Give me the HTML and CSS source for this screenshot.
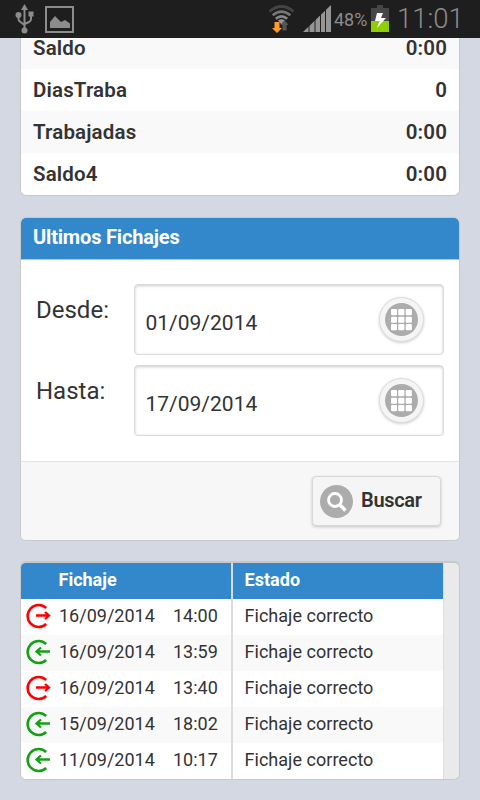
FILE: index.html
```html
<!DOCTYPE html>
<html lang="es">
<head>
  <meta charset="UTF-8" />
  <title>Fichajes</title>
  <link rel="stylesheet" href="styles.css">
</head>

<body>
  <!-- iconos compartidos -->
  <svg class="defs" width="0" height="0">
    <symbol id="salida" viewBox="0 0 26 26">
      <path d="M21.2 5A11 11 0 1 0 21.2 21" fill="none" stroke="#f00" stroke-width="2.6"/>
      <path d="M11 12.500h13M20 9l4 3.500-4 3.500" fill="none" stroke="#f00" stroke-width="2.3"/>
    </symbol>
    <symbol id="entrada" viewBox="0 0 26 26">
      <path d="M21.2 5A11 11 0 1 0 21.2 21" fill="none" stroke="#16a016" stroke-width="2.6"/>
      <path d="M25 12.500H11.500M16 8.500l-4.500 4 4.500 4" fill="none" stroke="#16a016" stroke-width="2.3"/>
    </symbol>
    <symbol id="rejilla" viewBox="0 0 33 33">
      <circle cx="16.500" cy="16.500" r="16.500" fill="#acacac"/>
      <g fill="#fff">
        <rect x="6" y="6" width="6" height="6.300" rx="1"/><rect x="13.200" y="6" width="6.200" height="6.300" rx="1"/><rect x="20.700" y="6" width="6.200" height="6.300" rx="1"/>
        <rect x="6" y="13.800" width="6" height="6" rx="1"/><rect x="13.200" y="13.800" width="6.200" height="6" rx="1"/><rect x="20.700" y="13.800" width="6.200" height="6" rx="1"/>
        <rect x="6" y="21" width="6" height="6.300" rx="1"/><rect x="13.200" y="21" width="6.200" height="6.300" rx="1"/><rect x="20.700" y="21" width="6.200" height="6.300" rx="1"/>
      </g>
    </symbol>
  </svg>

  <div class="statusbar">
    <svg class="usb" width="20" height="32" viewBox="0 0 20 32">
      <path d="M9.500 5v22M3.500 12v4q0 2 2 3l4 3M16 11v5q0 2-2 3l-4.500 2" fill="none" stroke="#8c8c8c" stroke-width="2"/>
      <path d="M9.500 1l3.500 6H6z" fill="#8c8c8c"/>
      <circle cx="3.500" cy="12" r="3" fill="#8c8c8c"/>
      <circle cx="9.500" cy="27.500" r="3" fill="#8c8c8c"/>
      <rect x="13.500" y="8.500" width="5" height="5" fill="#8c8c8c"/>
    </svg>
    <svg class="imagen" width="29" height="27" viewBox="0 0 29 27">
      <rect x="1" y="1" width="27" height="25" fill="none" stroke="#8c8c8c" stroke-width="2"/>
      <path d="M5 22v-6l5-6 6 6 4-2 5 3.500v4.500z" fill="#8c8c8c"/>
    </svg>
    <svg class="wifi" width="27" height="28" viewBox="0 0 27 28">
      <g fill="none" stroke-width="2.700">
        <path d="M1.500 6.500Q13.500-3.500 25.500 6.500" stroke="#444"/>
        <path d="M4.700 10.200Q13.500 3 22.300 10.200" stroke="#777"/>
        <path d="M7.800 13.700Q13.500 9 19.200 13.700" stroke="#888"/>
      </g>
      <path d="M10 15.500q3.500-2.500 7 0l-3.500 4z" fill="#999"/>
      <path d="M6.500 17h5v6h2.500l-5 5-5-5h2.500z" fill="#ff9c2c"/>
      <path d="M14.500 25.500V20H12.500l4-5 4 5h-2v5.500z" fill="#565656"/>
    </svg>
    <svg class="senal" width="28" height="27" viewBox="0 0 28 27">
      <path d="M0 27l28-27v27z" fill="#969696"/>
      <path d="M6 18v9M12 12v15M17.500 7v20M22.500 2v25" stroke="#202020" stroke-width="1"/>
    </svg>
    <span class="porcentaje">48%</span>
    <svg class="bateria" width="18" height="27" viewBox="0 0 18 27">
      <path d="M0 3h6V0h6v3h6v13H0z" fill="#464646"/>
      <path d="M0 16h18v11H0z" fill="#8fce00"/>
      <path d="M6 8h6l-2 5h5L6 23l2.500-7H4z" fill="#fff"/>
    </svg>
    <span class="reloj">11:01</span>
  </div>

  <div class="content">
    <div class="panel resumen">
      <div class="dato"><span>Saldo</span><span>0:00</span></div>
      <div class="dato"><span>DiasTraba</span><span>0</span></div>
      <div class="dato"><span>Trabajadas</span><span>0:00</span></div>
      <div class="dato"><span>Saldo4</span><span>0:00</span></div>
    </div>

    <div class="panel busqueda">
      <div class="titulo">Ultimos Fichajes</div>
      <div class="campos">
        <div class="campo">
          <label>Desde:</label>
          <div class="caja">
            <span>01/09/2014</span>
            <div class="boton-fecha"><svg width="33" height="33"><use href="#rejilla"/></svg></div>
          </div>
        </div>
        <div class="campo">
          <label>Hasta:</label>
          <div class="caja">
            <span>17/09/2014</span>
            <div class="boton-fecha"><svg width="33" height="33"><use href="#rejilla"/></svg></div>
          </div>
        </div>
      </div>
      <div class="pie">
        <div class="buscar">
          <svg width="33" height="33" viewBox="0 0 33 33">
            <circle cx="16.500" cy="16.500" r="16.500" fill="#acacac"/>
            <circle cx="15" cy="15" r="6.500" fill="none" stroke="#fff" stroke-width="2.800"/>
            <path d="M19.500 19.500l6 6" stroke="#fff" stroke-width="3.500"/>
          </svg>
          <span>Buscar</span>
        </div>
      </div>
    </div>

    <div class="panel lista">
      <div class="tabla">
        <div class="fila cabecera"><div class="fichaje">Fichaje</div><div class="estado">Estado</div></div>
        <div class="fila"><div class="fichaje"><svg><use href="#salida"/></svg><span class="fecha">16/09/2014</span><span>14:00</span></div><div class="estado">Fichaje correcto</div></div>
        <div class="fila"><div class="fichaje"><svg><use href="#entrada"/></svg><span class="fecha">16/09/2014</span><span>13:59</span></div><div class="estado">Fichaje correcto</div></div>
        <div class="fila"><div class="fichaje"><svg><use href="#salida"/></svg><span class="fecha">16/09/2014</span><span>13:40</span></div><div class="estado">Fichaje correcto</div></div>
        <div class="fila"><div class="fichaje"><svg><use href="#entrada"/></svg><span class="fecha">15/09/2014</span><span>18:02</span></div><div class="estado">Fichaje correcto</div></div>
        <div class="fila"><div class="fichaje"><svg><use href="#entrada"/></svg><span class="fecha">11/09/2014</span><span>10:17</span></div><div class="estado">Fichaje correcto</div></div>
      </div>
    </div>
  </div>
</body>
</html>
```
FILE: styles.css
```css
* {
  box-sizing: border-box;
}
body {
  margin: 0;
  height: 800px;
  overflow: hidden;
  background: #d4d8e2;
  color: #333;
  font-family: Roboto, sans-serif;
  display: flex;
  flex-direction: column;
}
svg {
  display: block;
  flex: none;
}
.defs {
  display: none;
}

/* Barra de estado */
.statusbar {
  flex: none;
  display: flex;
  align-items: flex-start;
  height: 38px;
  padding: 5px 0 0 15px;
  background: #1e1e1e;
  color: #8c8c8c;
  line-height: 28px;
}
.usb {
  margin-top: -2px;
}
.imagen {
  margin: 1px 0 0 10px;
}
.wifi {
  margin-left: 194px;
}
.senal {
  margin-left: 8px;
}
.porcentaje {
  width: 37px;
  margin-left: 3px;
  font-size: 18px;
  line-height: 30px;
}
.reloj {
  margin-left: 8px;
  font-size: 27.5px;
  font-weight: 300;
}

.content {
  flex: 1;
  padding: 0 20px;
}
.panel {
  border: 1px solid #c8c8c8;
  border-radius: 6px;
  background: #fff;
  overflow: hidden;
}

/* Totales, la primera fila queda pegada a la barra */
.resumen {
  margin-bottom: 21px;
  border-top: 0;
  border-radius: 0 0 6px 6px;
  overflow: visible;
}
.dato {
  display: flex;
  justify-content: space-between;
  height: 42px;
  padding: 0 12px;
  font-size: 20.5px;
  font-weight: 600;
  letter-spacing: 0.15px;
  line-height: 42px;
}
.dato:last-child {
  border-radius: 0 0 5px 5px;
}
.dato:first-child {
  height: 31px;
  line-height: 20px;
}
.dato:nth-child(odd) {
  background: #f9f9f9;
}

/* Busqueda */
.busqueda {
  height: 324px;
  margin-bottom: 20px;
}
.titulo {
  height: 42px;
  padding: 0 12px;
  border-bottom: 1px solid #a9cbe5;
  background: #3388cc;
  color: #fff;
  font-size: 20px;
  font-weight: 700;
  letter-spacing: -0.17px;
  line-height: 39px;
}
.campos {
  display: flex;
  flex-direction: column;
  gap: 10px;
  height: 201px;
  padding: 24px 15px 0;
}
.campo {
  display: flex;
}
.campo label {
  width: 98px;
  font-size: 24px;
  line-height: 52px;
}
.caja {
  flex: 1;
  display: flex;
  align-items: center;
  justify-content: space-between;
  height: 71px;
  padding: 0 19px 0 10.5px;
  border: 1px solid #dadada;
  border-radius: 4px;
  box-shadow: inset 0 1px 3px #ccc;
  font-size: 21px;
}
.caja span {
  padding-top: 6px;
}
.boton-fecha {
  display: flex;
  align-items: center;
  justify-content: center;
  width: 45px;
  height: 45px;
  border: 1px solid #ddd;
  border-radius: 50%;
  background: #f5f5f5;
  box-shadow: 0 1px 3px rgba(0, 0, 0, 0.2);
}
.pie {
  display: flex;
  justify-content: flex-end;
  height: 79px;
  padding: 14px 18px 0;
  border-top: 1px solid #e5e5e5;
  background: #f7f7f7;
}
.buscar {
  display: flex;
  align-items: center;
  gap: 8px;
  width: 129px;
  height: 50px;
  padding-left: 7px;
  border: 1px solid #d8d8d8;
  border-radius: 4px;
  background: #f5f5f5;
  box-shadow: 0 1px 3px rgba(0, 0, 0, 0.2);
  font-size: 20px;
  font-weight: 600;
  letter-spacing: -0.3px;
}
.buscar span {
  padding-bottom: 2px;
}

/* Lista de fichajes */
.lista {
  height: 219px;
  border-top-width: 2px;
  background: #eaeaea;
}
.tabla {
  width: 423px;
  border-right: 1px solid #ddd;
}
.fila {
  display: flex;
  height: 36px;
  background: #fff;
  font-size: 18px;
  line-height: 33px;
}
.fila:nth-child(odd) {
  background: #f9f9f9;
}
.fila svg {
  width: 26px;
  height: 26px;
  margin: 4px 8px 0 0;
}
.fichaje {
  display: flex;
  width: 212px;
  padding-left: 4px;
  border-right: 2px solid #dcdcdc;
}
.fecha {
  width: 114px;
}
.estado {
  padding-left: 11.5px;
  letter-spacing: 0.03px;
}
.fila.cabecera {
  background: #3388cc;
  color: #fff;
  font-weight: 700;
}
.cabecera .fichaje {
  padding-left: 37.5px;
}
```
